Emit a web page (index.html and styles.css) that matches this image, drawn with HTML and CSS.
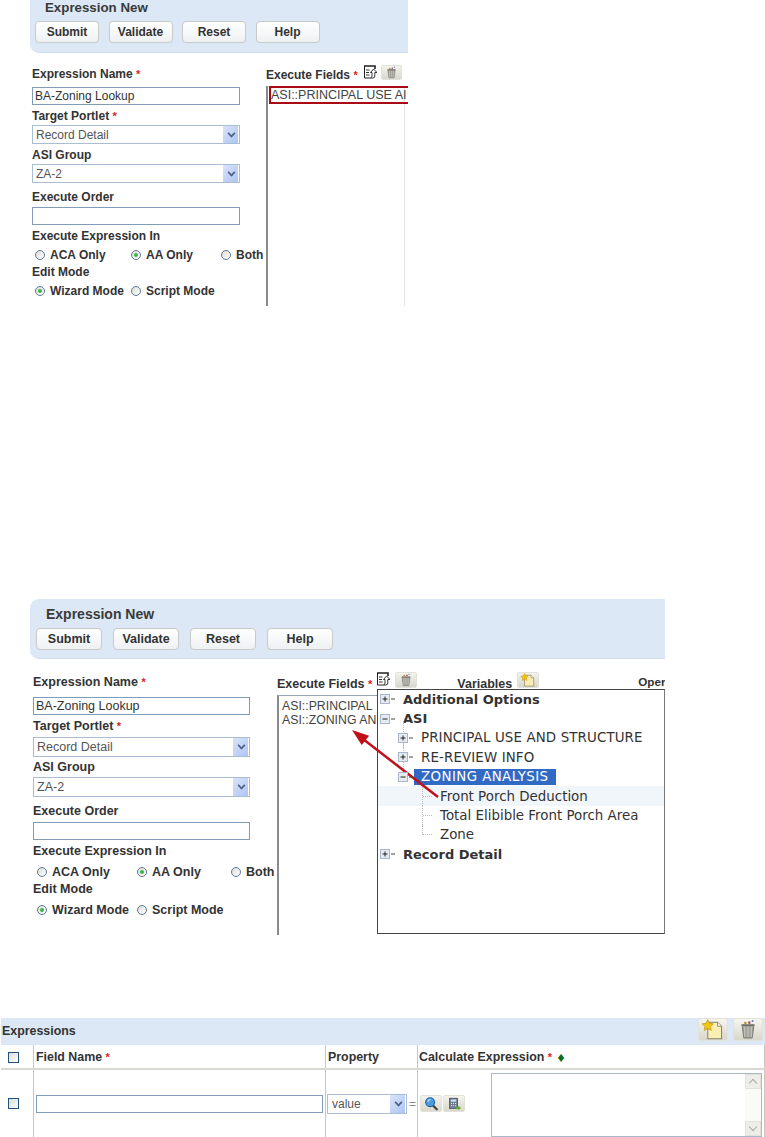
FILE: index.html
```html
<!DOCTYPE html>
<html lang="en">
<head>
<meta charset="utf-8">
<title>Expression New</title>
<link rel="stylesheet" href="styles.css">
</head>
<body>
<svg class="sprite" width="0" height="0" aria-hidden="true">
  <symbol id="i-export" viewBox="0 0 14 14">
    <path d="M1 1h11v3" fill="none" stroke="#222" stroke-width="1.600"/>
    <path d="M1.500 1v12h6" fill="#fff" stroke="#222" stroke-width="1"/>
    <path d="M3 5h3.500M3 7.500h3M3 10h3.500" stroke="#333" stroke-width="1"/>
    <path d="M7.500 7.500l3-3.500 3.500 3.500h-2.200v3.500q0 2-2 2H7.500q1.500-.5 1.500-2V7.500z" fill="#fff" stroke="#222" stroke-width=".9"/>
  </symbol>
  <symbol id="i-trash" viewBox="0 0 20 16">
    <path d="M5.500 5h9l-1.300 9.500H6.800z" fill="#a3a39c" stroke="#77776f" stroke-width=".7"/>
    <path d="M7.500 6v7.500M10 6v7.500M12.500 6v7.500" stroke="#c8c8c1" stroke-width=".8"/>
    <path d="M5 4.500h10" stroke="#66665f" stroke-width="1"/>
    <circle cx="8" cy="3" r="1" fill="#b89030"/><circle cx="11" cy="2.800" r="1" fill="#a05a70"/><circle cx="13.500" cy="1.500" r=".8" fill="#5a8ac0"/>
  </symbol>
  <symbol id="i-new" viewBox="0 0 20 16">
    <path d="M6 2.500h7.500l3 3v9.500H6z" fill="#fbeeb4" stroke="#8a8468" stroke-width=".8"/>
    <path d="M13.500 2.500v3h3" fill="#fff" stroke="#8a8468" stroke-width=".7"/>
    <path d="M6 .5l1.300 2.800 3 .4-2.200 2 .6 3-2.700-1.500-2.700 1.500.6-3-2.200-2 3-.4z" fill="#f2c80f" stroke="#b98e10" stroke-width=".5"/>
  </symbol>
  <symbol id="i-search" viewBox="0 0 22 17">
    <path d="M13 10.500l4.500 4.500" stroke="#444" stroke-width="2.600" stroke-linecap="round"/>
    <circle cx="10" cy="7" r="5" fill="#4f9be0" stroke="#1d62ad" stroke-width="1.300"/>
    <path d="M7.500 6.500a3 3 0 0 1 3-2.500" stroke="#d5ecff" stroke-width="1.200" fill="none"/>
  </symbol>
  <symbol id="i-calc" viewBox="0 0 22 17">
    <rect x="6" y="2.500" width="9" height="11.500" fill="#6f7c92" stroke="#3b465c" stroke-width=".8"/>
    <rect x="7.500" y="4" width="6" height="2.500" fill="#cfe0f2"/>
    <path d="M7.500 8.500h6M7.500 11h6" stroke="#dfe4ea" stroke-width="1.100" stroke-dasharray="1.300 1"/>
    <path d="M13 12.500h3v-1.500l3 2.500-3 2.500V15h-3z" fill="#64a83a"/>
  </symbol>
  <symbol id="i-plus" viewBox="0 0 18 10">
    <rect x=".5" y=".5" width="9" height="9" fill="#e6ebf3" stroke="#a9b6c8"/>
    <path d="M2.500 5h5M5 2.500v5" stroke="#222" stroke-width="1"/>
    <path d="M11 5h4" stroke="#444" stroke-width="1"/>
  </symbol>
  <symbol id="i-minus" viewBox="0 0 18 10">
    <rect x=".5" y=".5" width="9" height="9" fill="#e6ebf3" stroke="#a9b6c8"/>
    <path d="M2.500 5h5" stroke="#222" stroke-width="1"/>
    <path d="M11 5h4" stroke="#444" stroke-width="1"/>
  </symbol>
</svg>

<section class="panel panel-a">
  <header class="bar">
    <h2 class="bar-title">Expression New</h2>
    <div class="bar-actions">
      <span class="btn">Submit</span><span class="btn">Validate</span><span class="btn">Reset</span><span class="btn">Help</span>
    </div>
  </header>
  <div class="form">
    <div class="fields">
      <div class="label l-name">Expression Name <i class="req">*</i></div>
      <input class="text" type="text" value="BA-Zoning Lookup">
      <div class="label l-portlet">Target Portlet <i class="req">*</i></div>
      <div class="select"><span>Record Detail</span><b class="arrow"></b></div>
      <div class="label l-group">ASI Group</div>
      <div class="select"><span>ZA-2</span><b class="arrow"></b></div>
      <div class="label l-order">Execute Order</div>
      <input class="text" type="text">
      <div class="label l-exec">Execute Expression In</div>
      <div class="radios">
        <span class="opt o1"><b class="radio"></b>ACA Only</span>
        <span class="opt o2"><b class="radio on"></b>AA Only</span>
        <span class="opt"><b class="radio"></b>Both</span>
      </div>
      <div class="label l-edit">Edit Mode</div>
      <div class="radios">
        <span class="opt o1"><b class="radio on"></b>Wizard Mode</span>
        <span class="opt"><b class="radio"></b>Script Mode</span>
      </div>
    </div>
    <div class="exec">
      <div class="exec-head">
        <span class="label head-label">Execute Fields <i class="req">*</i></span>
        <svg class="ic-export"><use href="#i-export"/></svg>
        <span class="icon-btn ib-trash"><svg><use href="#i-trash"/></svg></span>
      </div>
      <div class="list">
        <div class="list-sel">ASI::PRINCIPAL USE AI</div>
      </div>
    </div>
  </div>
</section>

<section class="panel panel-b">
  <header class="bar">
    <h2 class="bar-title">Expression New</h2>
    <div class="bar-actions">
      <span class="btn">Submit</span><span class="btn">Validate</span><span class="btn">Reset</span><span class="btn">Help</span>
    </div>
  </header>
  <div class="form">
    <div class="fields">
      <div class="label l-name">Expression Name <i class="req">*</i></div>
      <input class="text" type="text" value="BA-Zoning Lookup">
      <div class="label l-portlet">Target Portlet <i class="req">*</i></div>
      <div class="select"><span>Record Detail</span><b class="arrow"></b></div>
      <div class="label l-group">ASI Group</div>
      <div class="select"><span>ZA-2</span><b class="arrow"></b></div>
      <div class="label l-order">Execute Order</div>
      <input class="text" type="text">
      <div class="label l-exec">Execute Expression In</div>
      <div class="radios">
        <span class="opt o1"><b class="radio"></b>ACA Only</span>
        <span class="opt o2"><b class="radio on"></b>AA Only</span>
        <span class="opt"><b class="radio"></b>Both</span>
      </div>
      <div class="label l-edit">Edit Mode</div>
      <div class="radios">
        <span class="opt o1"><b class="radio on"></b>Wizard Mode</span>
        <span class="opt"><b class="radio"></b>Script Mode</span>
      </div>
    </div>
    <div class="exec">
      <div class="exec-head">
        <span class="label head-label">Execute Fields <i class="req">*</i></span>
        <svg class="ic-export"><use href="#i-export"/></svg>
        <span class="icon-btn ib-trash"><svg><use href="#i-trash"/></svg></span>
        <span class="label head-label vars">Variables</span>
        <span class="icon-btn ib-new"><svg><use href="#i-new"/></svg></span>
        <span class="label oper">Oper</span>
      </div>
      <div class="list">
        <div>ASI::PRINCIPAL</div>
        <div>ASI::ZONING AN</div>
      </div>
    </div>
  </div>

  <div class="tree">
    <div class="node lv0 strong"><svg class="box"><use href="#i-plus"/></svg>Additional Options</div>
    <div class="node lv0 strong"><svg class="box"><use href="#i-minus"/></svg>ASI</div>
    <div class="node lv1"><svg class="box"><use href="#i-plus"/></svg>PRINCIPAL USE AND STRUCTURE</div>
    <div class="node lv1"><svg class="box"><use href="#i-plus"/></svg>RE-REVIEW INFO</div>
    <div class="node lv1 lv1-last"><svg class="box"><use href="#i-minus"/></svg><span class="picked">ZONING ANALYSIS</span></div>
    <div class="node lv2 hover">Front Porch Deduction</div>
    <div class="node lv2">Total Elibible Front Porch Area</div>
    <div class="node lv2 last">Zone</div>
    <div class="node lv0 strong"><svg class="box"><use href="#i-plus"/></svg>Record Detail</div>
  </div>

  <svg class="pointer" width="635" height="336" aria-hidden="true">
    <line x1="408" y1="198" x2="333" y2="140" stroke="#c0101a" stroke-width="2.500"/>
    <polygon points="322,131 331.700,146.100 339.100,136.700" fill="#c0101a"/>
  </svg>
</section>

<section class="grid-panel">
  <div class="grid-bar">
    <span class="label">Expressions</span>
    <div class="grid-tools">
      <span class="tool"><svg><use href="#i-new"/></svg></span>
      <span class="tool"><svg><use href="#i-trash"/></svg></span>
    </div>
  </div>
  <div class="grid-row grid-head">
    <div class="cell cell-check"><b class="check"></b></div>
    <div class="cell label">Field Name&nbsp;<i class="req">*</i></div>
    <div class="cell label">Property</div>
    <div class="cell label cell-last">Calculate Expression&nbsp;<i class="req">*</i>&nbsp;<i class="diamond">♦</i></div>
  </div>
  <div class="grid-row grid-body">
    <div class="cell cell-check"><b class="check"></b></div>
    <div class="cell"><input class="text field-input" type="text"></div>
    <div class="cell cell-prop">
      <div class="select prop-select"><span>value</span><b class="arrow"></b></div><span class="equals">=</span>
    </div>
    <div class="cell cell-calc">
      <span class="mini"><svg><use href="#i-search"/></svg></span>
      <span class="mini"><svg><use href="#i-calc"/></svg></span>
      <div class="area"><div class="scroll"><b class="up"></b><b class="down"></b></div></div>
    </div>
  </div>
</section>
</body>
</html>
```
FILE: styles.css
```css
* { box-sizing: border-box; }
html, body { margin: 0; padding: 0; background: #fff; }
body { width: 765px; height: 1137px; overflow: hidden; font-family: "Liberation Sans", Arial, sans-serif; color: #333; }
.sprite { position: absolute; }
.req { font-style: normal; color: #e02020; font-size: 11px; }

.panel { overflow: hidden; position: relative; }
.panel-a { margin-left: 30px; width: 378px; height: 306px; }
.panel-b { margin-left: 30px; margin-top: 293px; width: 635px; height: 336px; }

.bar { background: #dce8f5; border-bottom: 1px solid #cfdcec; }
.panel-a .bar { height: 53px; padding: 0 0 0 5px; border-bottom-left-radius: 9px; }
.panel-b .bar { height: 60px; padding: 7px 0 0 6px; border-radius: 9px 0 0 9px; }
.bar-title { margin: 0; font-weight: bold; line-height: 16px; color: #3a3a3a; padding-left: 10px; }
.panel-a .bar-title { font-size: 13.3px; }
.panel-b .bar-title { font-size: 14px; }
.bar-actions { display: flex; }
.panel-a .bar-actions { gap: 9.5px; margin-top: 5px; }
.panel-b .bar-actions { gap: 11px; margin-top: 6px; }
.btn {
  display: flex; align-items: center; justify-content: center; height: 22px; width: 64px;
  border: 1px solid #c9c9c5; border-radius: 4px; background: linear-gradient(#fff, #eef1f3);
  font-size: 12px; font-weight: bold; color: #333;
}
.panel-b .btn { width: 66px; font-size: 12.5px; }

.form { display: flex; align-items: flex-start; }
.fields { display: flex; flex-direction: column; flex: none; }
.panel-a .fields { width: 236px; padding: 14px 26px 0 2px; }
.panel-b .fields { width: 247px; padding: 16px 27px 0 3px; }

.label { font-size: 12px; font-weight: bold; line-height: 14px; color: #333; white-space: nowrap; }
.panel-b .label { font-size: 12.5px; }

.panel-a .l-name { margin-bottom: 6px; }
.panel-a .l-portlet { margin: 4px 0 2px; }
.panel-a .l-group { margin: 4px 0 2px; }
.panel-a .l-order { margin: 7px 0 3px; }
.panel-a .l-exec { margin: 4px 0 4px; }
.panel-a .l-edit { margin: 2px 0 4px; }
.panel-b .l-name { margin-bottom: 8px; }
.panel-b .l-portlet { margin: 4px 0 4px; }
.panel-b .l-group { margin: 3px 0 3px; }
.panel-b .l-order { margin: 7px 0 4px; }
.panel-b .l-exec { margin: 4px 0 6px; }
.panel-b .l-edit { margin: 2px 0 6px; }

.text {
  display: block; width: 100%; height: 18px; padding: 0 2px; margin: 0;
  border: 1px solid #7f9db9; border-radius: 0; background: #fff; outline: 0;
  font: 12px "Liberation Sans", Arial, sans-serif; color: #333;
}
.panel-b .text { font-size: 12.5px; }
.select {
  display: flex; align-items: center; justify-content: space-between; height: 19px; padding: 0 1px 0 3px;
  border: 1px solid #a9bdd3; background: #fff; font-size: 12px; color: #555;
}
.panel-b .select { height: 20px; font-size: 12.5px; }
.arrow {
  position: relative; flex: none; width: 15px; height: 100%;
  background: linear-gradient(135deg, #d9e4fb, #aec4f2);
}
.arrow::after {
  content: ""; position: absolute; left: 5px; top: 4px; width: 5px; height: 5px;
  border-right: 2px solid #4d6185; border-bottom: 2px solid #4d6185; transform: rotate(45deg) scale(.8);
}

.radios { display: flex; height: 16px; font-size: 12px; font-weight: bold; color: #333; white-space: nowrap; padding-left: 3px; }
.panel-b .radios { font-size: 12.5px; padding-left: 4px; }
.opt { display: flex; align-items: center; gap: 5px; flex: none; }
.o1 { width: 96px; }
.o2 { width: 90px; }
.panel-b .o1 { width: 100px; }
.panel-b .o2 { width: 94px; }
.radio {
  display: block; position: relative; flex: none; width: 10px; height: 10px; border-radius: 50%;
  border: 1px solid #5f7a93; background: linear-gradient(135deg, #dcdcd6, #fff);
}
.radio.on::after {
  content: ""; position: absolute; left: 2px; top: 2px; width: 4px; height: 4px; border-radius: 50%; background: #39b54a;
}

.exec { flex: 1; min-width: 0; }
.exec-head { display: flex; align-items: flex-start; }
.panel-a .exec-head { height: 15px; margin-top: 12px; }
.panel-b .exec-head { height: 16px; margin-top: 13px; }
.panel-a .head-label { margin-top: 3px; }
.panel-b .head-label { margin-top: 5px; }
.ic-export { flex: none; width: 14px; height: 14px; margin-left: 5px; }
.panel-b .ic-export { margin-left: 4px; }
.icon-btn {
  display: block; flex: none; width: 22px; height: 16px; border-radius: 2px;
  background: linear-gradient(#f4f3ec, #d9d8cc); border: 1px solid #e3e2da;
}
.panel-a .icon-btn { width: 21px; height: 15px; }
.icon-btn svg { display: block; width: 20px; height: 14px; }
.panel-a .icon-btn svg { width: 19px; height: 13px; }
.ib-trash { margin-left: 4px; }
.panel-b .ib-trash { margin-left: 5px; }
.panel-b .vars { margin-left: 40px; }
.ib-new { margin-left: 5px; }
.panel-b .oper { margin: 3px 0 0 99px; font-size: 11.7px; }

.list { border-left: 2px solid #8a8a8a; font-size: 12.3px; line-height: 14px; color: #444; }
.panel-a .list { width: 139px; height: 220px; margin-top: 6px; border-right: 1px solid #e6e6e6; }
.panel-b .list { width: 100px; height: 240px; margin-top: 7px; border-top: 1px solid #9aa7b4; padding: 3px 0 0 3px; white-space: nowrap; }
.list-sel {
  width: 141px; height: 18px; margin: 1px 0 0 1px; padding-left: 0; border: 2px solid #aa0a14;
  font-size: 12.5px; line-height: 14px; white-space: nowrap;
}

.tree { position: absolute; left: 347px; top: 90px; width: 288px; height: 245px; background: #fff; border: 1px solid #444; border-right-color: #777; }
.node { position: relative; display: flex; align-items: center; height: 19.4px; font-family: "DejaVu Sans", Verdana, sans-serif; font-size: 13.4px; color: #333; white-space: nowrap; }
.node:first-child { margin-top: -.5px; }
.strong { font-weight: bold; font-size: 13px; }
.box { position: relative; z-index: 1; flex: none; width: 18px; height: 10px; margin-right: 5px; }
.lv0 { padding-left: 2px; }
.lv1 { padding-left: 20px; letter-spacing: .12px; }
.lv2 { padding-left: 62px; }
.hover { background: #f1f6fb; }
.picked { margin-left: -7px; padding: 0 8px 0 7px; line-height: 16px; background: #316ac5; color: #fff; letter-spacing: .4px; }
.lv1::before {
  content: ""; position: absolute; left: 25px; top: -6px; bottom: 0; border-left: 1px dotted #bbb;
}
.lv1-last::before { bottom: 50%; }
.lv2::before {
  content: ""; position: absolute; left: 44px; top: 0; bottom: 0; width: 9px; border-left: 1px dotted #bbb;
  background: repeating-linear-gradient(90deg, #bbb 0 1px, transparent 1px 2px) left center / 100% 1px no-repeat;
}
.last::before { bottom: 50%; background-position: left bottom; }
.pointer { position: absolute; left: 0; top: 0; }

.grid-panel { margin: 83px 0 0 1px; width: 764px; }
.grid-panel .label { font-size: 12.4px; }
.grid-bar { display: flex; align-items: flex-start; justify-content: space-between; height: 27px; padding: 0 1px; background: #dce8f5; }
.grid-bar .label { margin-top: 6px; }
.grid-tools { display: flex; gap: 5px; padding-right: 1px; }
.tool { display: block; width: 30px; height: 23px; border-radius: 3px; background: linear-gradient(#f6f5ee, #d8d7cb); border: 1px solid #e3e2da; }
.tool svg { display: block; width: 28px; height: 21px; }
.grid-row { display: grid; grid-template-columns: 32px 292px 92px 1fr; }
.grid-head { height: 25px; border-bottom: 2px solid #d8d7d0; }
.grid-body { height: 67px; }
.cell { display: flex; align-items: center; border-left: 1px solid #c8c8c0; padding-left: 2px; min-width: 0; }
.grid-head .cell { padding-top: 1px; }
.grid-head .cell-last { padding-left: 1px; }
.cell:first-child { border-left: 0; }
.grid-row .cell:last-child { border-right: 1px solid #c8c8c0; }
.cell-check { padding: 0 0 0 7px; }
.check { display: block; width: 11px; height: 11px; border: 1px solid #1c5180; background: linear-gradient(135deg, #dcdcd6, #fff); }
.diamond { font-style: normal; color: #0a6e1e; font-size: 14px; margin-left: 2px; }
.field-input { width: 287px; }
.cell-prop { padding-left: 0; }
.prop-select { width: 80px; margin-left: 1px; flex: none; height: 20px; padding-left: 4px; }
.equals { color: #888; font-size: 12px; margin-left: 2px; }
.mini { display: block; flex: none; width: 22px; height: 17px; border-radius: 2px; background: linear-gradient(#f5f4ed, #d9d8cc); border: 1px solid #e3e2da; margin-left: 1px; }
.mini svg { display: block; width: 20px; height: 15px; }
.cell-calc { position: relative; padding-left: 1px; }
.area { width: 271px; height: 64px; margin: 3px 0 0 26px; align-self: flex-start; border: 1px solid #a9b8ca; display: flex; justify-content: flex-end; }
.scroll { display: flex; flex-direction: column; justify-content: space-between; width: 16px; background: #fafaf6; }
.scroll b { display: block; position: relative; height: 15px; background: #eeeee8; border: 1px solid #e2e2da; }
.scroll b::after { content: ""; position: absolute; left: 4px; width: 5px; height: 5px; border-left: 1px solid #aaa; border-top: 1px solid #aaa; }
.up::after { top: 5px; transform: rotate(45deg); }
.down::after { top: 2px; transform: rotate(225deg); }
```
